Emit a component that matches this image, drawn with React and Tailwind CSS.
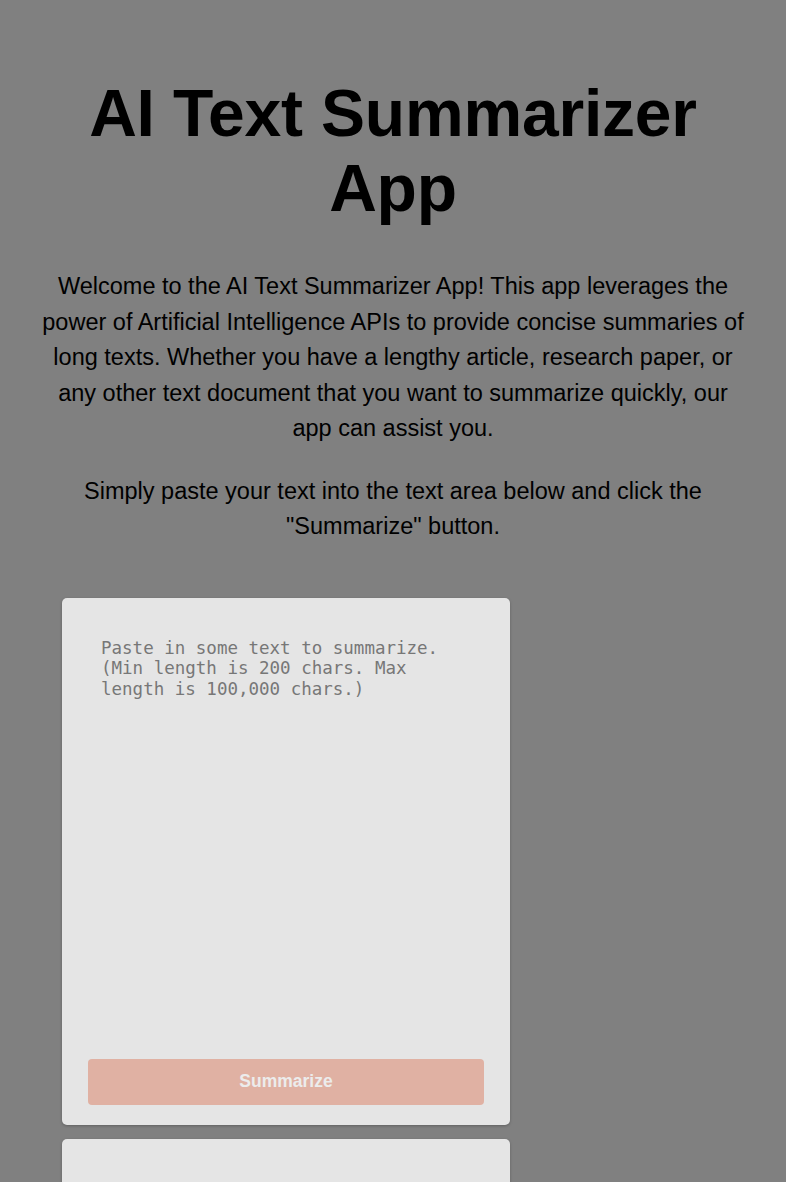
export default function App() {
  return (
    <div className="min-h-[1182px] bg-[#808080] text-black" style={{ fontFamily: '"Liberation Sans", Arial, sans-serif' }}>
      <div className="px-[38px] pt-[76px] text-center">
        <h1 className="text-[66px] leading-[75px] font-bold tracking-[-0.2px]">AI Text Summarizer<br />App</h1>
        <p className="mt-[43px] text-[23.5px] leading-[35.5px]">
          Welcome to the AI Text Summarizer App! This app leverages the power of Artificial Intelligence APIs to provide concise summaries of long texts. Whether you have a lengthy article, research paper, or any other text document that you want to summarize quickly, our app can assist you.
        </p>
        <p className="mt-[27px] px-[36px] text-[23.5px] leading-[35.5px]">
          Simply paste your text into the text area below and click the "Summarize" button.
        </p>
      </div>
      <div className="flex flex-col gap-[14px] pl-[62px] pt-[53px]">
        <div className="flex h-[527px] w-[448px] flex-col rounded-[5px] bg-[#e5e5e5] px-[26px] pt-[26px] pb-[20px] shadow-[0_1px_3px_rgba(0,0,0,0.25)]">
          <textarea
            className="flex-1 resize-none bg-transparent px-[13px] pt-[14px] text-[17.5px] leading-[20.5px] text-[#555] placeholder-[#777] outline-none"
            style={{ fontFamily: '"DejaVu Sans Mono", monospace' }}
            placeholder="Paste in some text to summarize. (Min length is 200 chars. Max length is 100,000 chars.)"
          />
          <button className="mt-[10px] h-[46px] w-full rounded-[4px] bg-[#e0b1a3] text-[17.5px] font-bold text-[#ececec]">
            Summarize
          </button>
        </div>
        <div className="h-[80px] w-[448px] rounded-[5px] bg-[#e5e5e5] shadow-[0_1px_3px_rgba(0,0,0,0.25)]" />
      </div>
    </div>
  );
}
